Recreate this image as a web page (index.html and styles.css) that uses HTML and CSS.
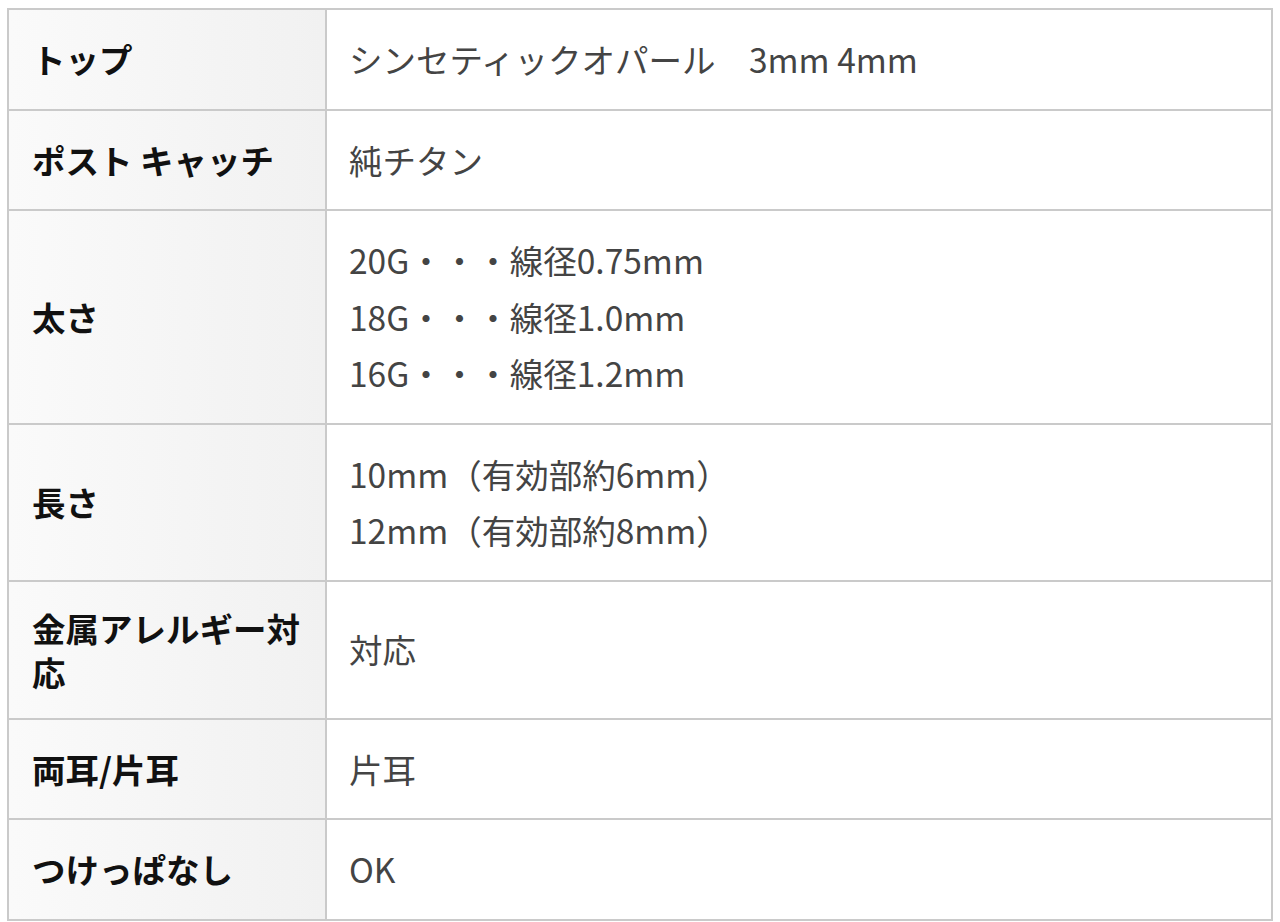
FILE: index.html
```html
<!DOCTYPE html>
<html lang="ja">
<head>
<meta charset="utf-8">
<link rel="stylesheet" href="styles.css">
</head>
<body>
<table class="spec">
  <tr><th>トップ</th><td>シンセティックオパール　3mm 4mm</td></tr>
  <tr><th>ポスト キャッチ</th><td>純チタン</td></tr>
  <tr><th>太さ</th><td>20G・・・線径0.75mm<br>18G・・・線径1.0mm<br>16G・・・線径1.2mm</td></tr>
  <tr><th>長さ</th><td>10mm（有効部約6mm）<br>12mm（有効部約8mm）</td></tr>
  <tr><th>金属アレルギー対応</th><td>対応</td></tr>
  <tr><th>両耳/片耳</th><td>片耳</td></tr>
  <tr><th>つけっぱなし</th><td>OK</td></tr>
</table>
</body>
</html>
```

FILE: styles.css
```css
html, body {
  margin: 0;
  padding: 0;
  background: #ffffff;
}
body {
  padding: 8px 7px 0 7px;
  font-family: "Noto Sans CJK JP", "Noto Sans", sans-serif;
}
.spec {
  width: 1266px;
  border-collapse: collapse;
  table-layout: fixed;
}
.spec th, .spec td {
  border: 2px solid #cacaca;
  vertical-align: middle;
  text-align: left;
}
.spec th {
  width: 271px;
  padding: 24px 22px 24px 23px;
  font-size: 33.5px;
  line-height: 44px;
  font-weight: bold;
  color: #111;
  background: linear-gradient(to right, #fafafa, #f1f1f1);
}
.spec td {
  padding: 21px 22px;
  font-size: 33.5px;
  line-height: 56.5px;
  color: #444;
  background: #fff;
}
```
